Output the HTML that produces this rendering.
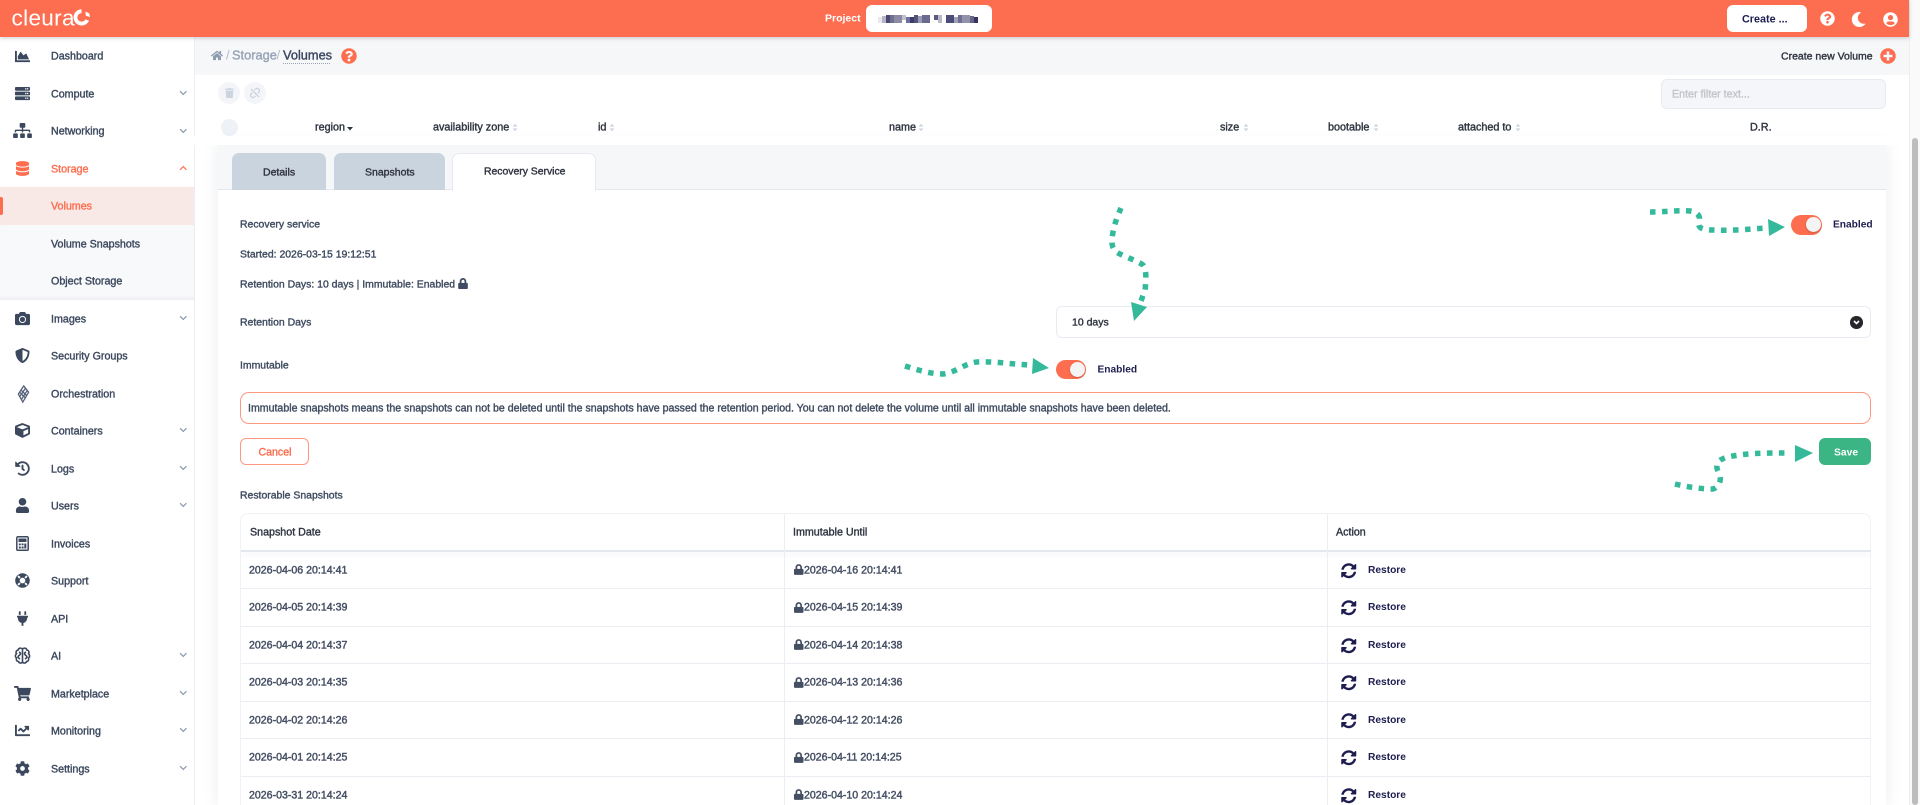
<!DOCTYPE html>
<html><head><meta charset="utf-8"><title>Volumes</title>
<style>
*{box-sizing:border-box}
html,body{margin:0;padding:0;width:1920px;height:805px;overflow:hidden;background:#fff;font-family:"Liberation Sans",sans-serif}
#w{position:absolute;left:0;top:0;width:1920px;height:805px;overflow:hidden;filter:blur(.3px)}
.a{position:absolute}
.t{position:absolute;white-space:nowrap;line-height:16px;font-size:10.45px;color:#3f4b60;-webkit-text-stroke:.38px currentColor;transform:translateY(.4px)}
.n{left:51px;font-size:10.7px;color:#3c485e}
.o{color:#fd6e50!important}
.h{font-size:10.8px;color:#2f3440}
.d{font-size:10.6px;color:#454f63;-webkit-text-stroke:.45px currentColor}
.r{left:1368px;font-size:10.2px;font-weight:bold;color:#1d1d50;-webkit-text-stroke:0;transform:translateY(1.2px)}
svg{position:absolute;display:block;overflow:visible}
.i{fill:#3c485e}
.c{left:178.750px;color:#8a97aa}
.line{position:absolute;left:241px;width:1630px;height:1px;background:#ebedf2}
</style></head><body>
<svg width="0" height="0" style="position:absolute"><defs>
<symbol id="lock" viewBox="0 0 448 512"><path d="M400 224h-24v-72C376 68.2 307.8 0 224 0S72 68.2 72 152v72H48c-26.5 0-48 21.5-48 48v192c0 26.5 21.5 48 48 48h352c26.5 0 48-21.5 48-48V272c0-26.5-21.5-48-48-48zm-104 0H152v-72c0-39.7 32.3-72 72-72s72 32.3 72 72v72z"/></symbol>
<symbol id="q" viewBox="0 0 512 512"><path d="M504 256c0 136.997-111.043 248-248 248S8 392.997 8 256C8 119.083 119.043 8 256 8s248 111.083 248 248zM262.655 90c-54.497 0-89.255 22.957-116.549 63.758-3.536 5.286-2.353 12.415 2.715 16.258l34.699 26.31c5.205 3.947 12.621 3.008 16.665-2.122 17.864-22.658 30.113-35.797 57.303-35.797 20.429 0 45.698 13.148 45.698 32.958 0 14.976-12.363 22.667-32.534 33.976C247.128 238.528 216 254.941 216 296v4c0 6.627 5.373 12 12 12h56c6.627 0 12-5.373 12-12v-1.333c0-28.462 83.186-29.647 83.186-106.667 0-58.002-60.165-102-116.531-102zM256 338c-25.365 0-46 20.635-46 46 0 25.364 20.635 46 46 46s46-20.636 46-46c0-25.365-20.635-46-46-46z"/></symbol>
<symbol id="sync" viewBox="0 0 512 512"><path d="M370.72 133.28C339.458 104.008 298.888 87.962 255.848 88c-77.458.068-144.328 53.178-162.791 126.85-1.344 5.363-6.122 9.15-11.651 9.15H24.103c-7.498 0-13.194-6.807-11.807-14.176C33.933 94.924 134.813 8 256 8c66.448 0 126.791 26.136 171.315 68.685L463.03 40.97C478.149 25.851 504 36.559 504 57.941V192c0 13.255-10.745 24-24 24H345.941c-21.382 0-32.09-25.851-16.971-40.971l41.75-41.749zM32 296h134.059c21.382 0 32.09 25.851 16.971 40.971l-41.75 41.75c31.262 29.273 71.835 45.319 114.876 45.28 77.418-.07 144.315-53.144 162.787-126.849 1.344-5.363 6.122-9.15 11.651-9.15h57.304c7.498 0 13.193 6.807 11.807 14.176C478.067 417.076 377.187 504 256 504c-66.448 0-126.791-26.136-171.315-68.685L48.97 471.03C33.851 486.149 8 475.441 8 454.059V320c0-13.255 10.745-24 24-24z"/></symbol>
<symbol id="sort" viewBox="0 0 10 14"><path d="M5 0.5 9 5.5H1zM5 13.5 1 8.5H9z"/></symbol>
<symbol id="chev" viewBox="0 0 12 8"><path d="M1.5 1.5 6 6l4.500-4.500" fill="none" stroke="currentColor" stroke-width="1.700"/></symbol>
</defs></svg>
<div id="w">

<!-- main backgrounds -->
<div class="a" style="left:194px;top:37px;width:1715px;height:38px;background:#f6f7f9"></div>
<div class="a" style="left:1909px;top:0;width:11px;height:805px;background:#fafafa;border-left:1px solid #eee"></div>
<div class="a" style="left:1912px;top:138px;width:6px;height:667px;background:#bdbdbd;border-radius:3px"></div>

<!-- sidebar -->
<div class="a" style="left:0;top:37px;width:195px;height:768px;background:#fff;border-right:1px solid #eceef3"></div>
<div class="a" style="left:0;top:187px;width:194px;height:113px;background:#f8f9fb;box-shadow:inset 0 4px 4px -3px #e4e4e8,inset 0 -4px 4px -3px #e8e8ec"></div>
<div class="a" style="left:0;top:187px;width:194px;height:38px;background:#f8e9e7"></div>
<div class="a" style="left:0;top:197px;width:2.500px;height:18px;background:#fd6e50;border-radius:0 2px 2px 0"></div>

<div class="t n" style="top:48px">Dashboard</div>
<div class="t n" style="top:85.500px">Compute</div>
<div class="t n" style="top:123px">Networking</div>
<div class="t n o" style="top:160.500px">Storage</div>
<div class="t n o" style="top:198px">Volumes</div>
<div class="t n" style="top:235.500px">Volume Snapshots</div>
<div class="t n" style="top:273px">Object Storage</div>
<div class="t n" style="top:310.500px">Images</div>
<div class="t n" style="top:348px">Security Groups</div>
<div class="t n" style="top:385.500px">Orchestration</div>
<div class="t n" style="top:423px">Containers</div>
<div class="t n" style="top:460.500px">Logs</div>
<div class="t n" style="top:498px">Users</div>
<div class="t n" style="top:535.500px">Invoices</div>
<div class="t n" style="top:573px">Support</div>
<div class="t n" style="top:610.500px">API</div>
<div class="t n" style="top:648px">AI</div>
<div class="t n" style="top:685.500px">Marketplace</div>
<div class="t n" style="top:723px">Monitoring</div>
<div class="t n" style="top:760.500px">Settings</div>

<!-- sidebar chevrons -->
<svg class="c" style="top:90px" width="8.500" height="6"><use href="#chev"/></svg>
<svg class="c" style="top:128px" width="8.500" height="6"><use href="#chev"/></svg>
<svg class="c" style="top:165px;color:#fd6e50;transform:rotate(180deg)" width="8.500" height="6"><use href="#chev"/></svg>
<svg class="c" style="top:315px" width="8.500" height="6"><use href="#chev"/></svg>
<svg class="c" style="top:427px" width="8.500" height="6"><use href="#chev"/></svg>
<svg class="c" style="top:465px" width="8.500" height="6"><use href="#chev"/></svg>
<svg class="c" style="top:502px" width="8.500" height="6"><use href="#chev"/></svg>
<svg class="c" style="top:652px" width="8.500" height="6"><use href="#chev"/></svg>
<svg class="c" style="top:690px" width="8.500" height="6"><use href="#chev"/></svg>
<svg class="c" style="top:727px" width="8.500" height="6"><use href="#chev"/></svg>
<svg class="c" style="top:765px" width="8.500" height="6"><use href="#chev"/></svg>

<!-- sidebar icons -->
<svg class="i" style="left:15px;top:49px" width="15" height="15" viewBox="0 0 512 512"><path d="M500 384c6.600 0 12 5.400 12 12v40c0 6.600-5.400 12-12 12H12c-6.600 0-12-5.400-12-12V76c0-6.600 5.400-12 12-12h40c6.600 0 12 5.400 12 12v308h436zM372.700 159.500L288 216l-85.300-113.700c-5.100-6.800-15.500-6.300-19.900 1L96 248v104h384l-89.900-187.800c-3.200-6.500-11.400-8.700-17.400-4.700z"/></svg>
<svg class="i" style="left:15px;top:86px" width="15" height="15" viewBox="0 0 512 512"><path d="M480 160H32c-17.673 0-32-14.327-32-32V64c0-17.673 14.327-32 32-32h448c17.673 0 32 14.327 32 32v64c0 17.673-14.327 32-32 32zm-48-88c-13.255 0-24 10.745-24 24s10.745 24 24 24 24-10.745 24-24-10.745-24-24-24zm-64 0c-13.255 0-24 10.745-24 24s10.745 24 24 24 24-10.745 24-24-10.745-24-24-24zm112 248H32c-17.673 0-32-14.327-32-32v-64c0-17.673 14.327-32 32-32h448c17.673 0 32 14.327 32 32v64c0 17.673-14.327 32-32 32zm-48-88c-13.255 0-24 10.745-24 24s10.745 24 24 24 24-10.745 24-24-10.745-24-24-24zm-64 0c-13.255 0-24 10.745-24 24s10.745 24 24 24 24-10.745 24-24-10.745-24-24-24zm112 248H32c-17.673 0-32-14.327-32-32v-64c0-17.673 14.327-32 32-32h448c17.673 0 32 14.327 32 32v64c0 17.673-14.327 32-32 32zm-48-88c-13.255 0-24 10.745-24 24s10.745 24 24 24 24-10.745 24-24-10.745-24-24-24zm-64 0c-13.255 0-24 10.745-24 24s10.745 24 24 24 24-10.745 24-24-10.745-24-24-24z"/></svg>
<svg class="i" style="left:13px;top:123px" width="19" height="15" viewBox="0 0 640 512"><path d="M128 352H32c-17.670 0-32 14.330-32 32v96c0 17.670 14.330 32 32 32h96c17.670 0 32-14.330 32-32v-96c0-17.670-14.330-32-32-32zm-24-80h192v48h48v-48h192v48h48v-57.590c0-21.170-17.230-38.410-38.410-38.410H344v-64h40c17.670 0 32-14.330 32-32V32c0-17.670-14.330-32-32-32H256c-17.670 0-32 14.330-32 32v96c0 17.670 14.330 32 32 32h40v64H94.410C73.230 224 56 241.230 56 262.410V320h48v-48zm264 80h-96c-17.670 0-32 14.330-32 32v96c0 17.670 14.330 32 32 32h96c17.670 0 32-14.330 32-32v-96c0-17.670-14.330-32-32-32zm240 0h-96c-17.670 0-32 14.330-32 32v96c0 17.670 14.330 32 32 32h96c17.670 0 32-14.330 32-32v-96c0-17.670-14.330-32-32-32z"/></svg>
<svg style="left:16px;top:161px;fill:#fd6e50" width="13" height="15" viewBox="0 0 448 512"><path d="M448 73.143v45.714C448 159.143 347.667 192 224 192S0 159.143 0 118.857V73.143C0 32.857 100.333 0 224 0s224 32.857 224 73.143zM448 176v102.857C448 319.143 347.667 352 224 352S0 319.143 0 278.857V176c48.125 33.143 136.208 48.572 224 48.572S399.874 209.143 448 176zm0 160v102.857C448 479.143 347.667 512 224 512S0 479.143 0 438.857V336c48.125 33.143 136.208 48.572 224 48.572S399.874 369.143 448 336z"/></svg>
<svg class="i" style="left:15px;top:311px" width="15" height="15" viewBox="0 0 512 512"><path d="M512 144v288c0 26.500-21.500 48-48 48H48c-26.500 0-48-21.500-48-48V144c0-26.500 21.500-48 48-48h88l12.300-32.900c7-18.700 24.900-31.100 44.900-31.100h125.500c20 0 37.900 12.400 44.900 31.100L376 96h88c26.500 0 48 21.500 48 48zM376 288c0-66.200-53.800-120-120-120s-120 53.800-120 120 53.800 120 120 120 120-53.800 120-120zm-32 0c0 48.500-39.500 88-88 88s-88-39.500-88-88 39.500-88 88-88 88 39.500 88 88z"/></svg>
<svg class="i" style="left:15px;top:348px" width="15" height="15" viewBox="0 0 512 512"><path d="M466.500 83.700l-192-80a48.150 48.150 0 0 0-36.900 0l-192 80C27.700 91.100 16 108.600 16 128c0 198.500 114.500 335.700 221.500 380.300 11.800 4.900 25.100 4.900 36.900 0C360.100 472.600 496 349.300 496 128c0-19.400-11.700-36.900-29.500-44.300zM256.100 446.300l-.1-381 175.900 73.300c-3.300 151.400-82.100 261.100-175.800 307.700z"/></svg>
<svg style="left:17px;top:385px" width="12.500" height="18" viewBox="0 0 14 20"><g fill="none" stroke="#56627a" stroke-width="1.500"><path d="M7.500 1 13 8 6.500 19 1.500 10z"/><path d="M4.500 5.500 11 12M3 8l6.500 6.500M9.500 3.500 3 13M11.500 6 5 16"/></g></svg>
<svg class="i" style="left:15px;top:423px" width="15" height="15" viewBox="0 0 512 512"><path d="M239.100 6.300l-208 78c-18.700 7-31.100 25-31.100 45v225.100c0 18.200 10.300 34.800 26.500 42.900l208 104c13.500 6.800 29.400 6.800 42.900 0l208-104c16.300-8.100 26.500-24.800 26.500-42.900V129.300c0-20-12.400-37.900-31.100-44.900l-208-78C262 2.200 250 2.200 239.100 6.300zM256 68.400l192 72v1.100l-192 78-192-78v-1.100l192-72zm32 356V275.500l160-65v133.900l-160 80z"/></svg>
<svg class="i" style="left:15px;top:461px" width="15" height="15" viewBox="0 0 512 512"><path d="M504 255.531c.253 136.640-111.180 248.372-247.820 248.468-59.015.042-113.223-20.530-155.822-54.911-11.077-8.940-11.905-25.541-1.839-35.607l11.267-11.267c8.609-8.609 22.353-9.551 31.891-1.984C173.062 425.135 212.781 440 256 440c101.705 0 184-82.311 184-184 0-101.705-82.311-184-184-184-48.814 0-93.149 18.969-126.068 49.932l50.754 50.754c10.080 10.080 2.941 27.314-11.313 27.314H24c-8.837 0-16-7.163-16-16V38.627c0-14.254 17.234-21.393 27.314-11.314l49.372 49.372C129.209 34.136 189.552 8 256 8c136.810 0 247.747 110.780 248 247.531zm-180.912 78.784l9.823-12.630c8.138-10.463 6.253-25.542-4.210-33.679L288 256.349V152c0-13.255-10.745-24-24-24h-16c-13.255 0-24 10.745-24 24v135.651l65.409 50.874c10.463 8.137 25.541 6.253 33.679-4.210z"/></svg>
<svg class="i" style="left:15px;top:498px" width="15" height="15" viewBox="0 0 448 512"><path d="M224 256c70.700 0 128-57.300 128-128S294.700 0 224 0 96 57.300 96 128s57.300 128 128 128zm89.600 32h-16.700c-22.200 10.200-46.900 16-72.900 16s-50.600-5.800-72.900-16h-16.700C60.200 288 0 348.200 0 422.400V464c0 26.500 21.500 48 48 48h352c26.500 0 48-21.500 48-48v-41.600c0-74.200-60.200-134.400-134.400-134.400z"/></svg>
<svg style="left:16px;top:536px" width="13" height="15" viewBox="0 0 13 15"><path fill="none" stroke="#3c485e" stroke-width="1.500" d="M1.800.8h9.400a1 1 0 0 1 1 1v11.400a1 1 0 0 1-1 1H1.800a1 1 0 0 1-1-1V1.800a1 1 0 0 1 1-1z"/><path fill="#3c485e" d="M2.500 2.500h8V6h-8zM2.800 7.500h2v1.800h-2zM5.600 7.500h2v1.800h-2zM8.300 7.500h2v5h-2zM2.800 10.500h2v2h-2zM5.600 10.500h2v2h-2z"/></svg>
<svg class="i" style="left:15px;top:573px" width="15" height="15" viewBox="0 0 512 512"><path d="M256 8C119.033 8 8 119.033 8 256s111.033 248 248 248 248-111.033 248-248S392.967 8 256 8zm173.696 119.559l-63.399 63.399c-10.987-18.559-26.670-34.252-45.255-45.255l63.399-63.399a218.396 218.396 0 0 1 45.255 45.255zM256 352c-53.019 0-96-42.981-96-96s42.981-96 96-96 96 42.981 96 96-42.981 96-96 96zM127.559 82.304l63.399 63.399c-18.559 10.987-34.252 26.670-45.255 45.255l-63.399-63.399a218.372 218.372 0 0 1 45.255-45.255zM82.304 384.441l63.399-63.399c10.987 18.559 26.670 34.252 45.255 45.255l-63.399 63.399a218.396 218.396 0 0 1-45.255-45.255zm302.137 45.255l-63.399-63.399c18.559-10.987 34.252-26.670 45.255-45.255l63.399 63.399a218.403 218.403 0 0 1-45.255 45.255z"/></svg>
<svg class="i" style="left:17px;top:611px" width="11" height="15" viewBox="0 0 384 512"><path d="M320,32a32,32,0,0,0-64,0v96h64Zm48,128H16A16,16,0,0,0,0,176v32a16,16,0,0,0,16,16H32v32A160.070,160.070,0,0,0,160,412.800V512h64V412.800A160.070,160.070,0,0,0,352,256V224h16a16,16,0,0,0,16-16V176A16,16,0,0,0,368,160ZM128,32a32,32,0,0,0-64,0v96h64Z"/></svg>
<svg style="left:14px;top:647px" width="17" height="17" viewBox="0 0 17 17"><g fill="none" stroke="#3c485e" stroke-width="1.600"><path d="M8.500 2C7 .5 4.500 1 4.200 3 2.200 3.200 1.500 5.500 2.500 6.700 1 8 1 10 2.500 11c-.8 1.700.3 3.500 2 3.500.5 1.800 2.800 2 4 .7 1.200 1.300 3.500 1.100 4-.7 1.700 0 2.800-1.800 2-3.500 1.500-1 1.500-3 0-4.300 1-1.200.3-3.500-1.700-3.700C12.500 1 10 .5 8.500 2z"/><path d="M8.500 2v13.200M5 5c2 1 2 2 0 3.500s0 3 1 3.500M12 5c-2 1-2 2 0 3.500s0 3-1 3.500"/></g></svg>
<svg class="i" style="left:14px;top:686px" width="17" height="15" viewBox="0 0 576 512"><path d="M528.120 301.319l47.273-208C578.806 78.301 567.391 64 551.990 64H159.208l-9.166-44.810C147.758 8.021 137.930 0 126.529 0H24C10.745 0 0 10.745 0 24v16c0 13.255 10.745 24 24 24h69.883l70.248 343.435C147.325 417.100 136 435.222 136 456c0 30.928 25.072 56 56 56s56-25.072 56-56c0-15.674-6.447-29.835-16.824-40h209.647C430.447 426.165 424 440.326 424 456c0 30.928 25.072 56 56 56s56-25.072 56-56c0-22.172-12.888-41.332-31.579-50.405l5.517-24.276c3.413-15.018-8.002-29.319-23.403-29.319H218.117l-6.545-32h293.145c11.206 0 20.920-7.754 23.403-18.681z"/></svg>
<svg class="i" style="left:15px;top:723px" width="15" height="15" viewBox="0 0 512 512"><path d="M496 384H64V80c0-8.840-7.160-16-16-16H16C7.160 64 0 71.160 0 80v336c0 17.670 14.330 32 32 32h464c8.840 0 16-7.160 16-16v-32c0-8.840-7.160-16-16-16zM464 96H345.940c-21.380 0-32.090 25.850-16.970 40.970l32.400 32.400L288 242.750l-73.370-73.370c-12.500-12.500-32.760-12.500-45.250 0l-68.690 68.690c-6.250 6.250-6.250 16.380 0 22.630l22.620 22.620c6.250 6.250 16.380 6.250 22.630 0L192 237.250l73.370 73.370c12.500 12.500 32.760 12.500 45.250 0l96-96 32.400 32.400c15.120 15.120 40.970 4.410 40.970-16.970V112c.010-8.840-7.150-16-15.990-16z"/></svg>
<svg class="i" style="left:15px;top:761px" width="15" height="15" viewBox="0 0 512 512"><path d="M487.400 315.700l-42.600-24.600c4.300-23.200 4.300-47 0-70.200l42.600-24.600c4.900-2.800 7.100-8.600 5.500-14-11.100-35.600-30-67.800-54.700-94.600-3.800-4.100-10-5.100-14.800-2.300L380.800 110c-17.900-15.400-38.500-27.300-60.800-35.100V25.800c0-5.600-3.900-10.500-9.400-11.700-36.700-8.200-74.300-7.800-109.200 0-5.500 1.200-9.400 6.100-9.400 11.700V75c-22.200 7.900-42.800 19.800-60.800 35.100L88.700 85.500c-4.900-2.800-11-1.900-14.800 2.300-24.700 26.700-43.600 58.900-54.700 94.600-1.700 5.400.6 11.200 5.500 14L67.300 221c-4.300 23.200-4.300 47 0 70.200l-42.600 24.600c-4.900 2.800-7.100 8.600-5.500 14 11.100 35.600 30 67.800 54.700 94.600 3.800 4.100 10 5.100 14.800 2.300l42.600-24.600c17.900 15.400 38.500 27.300 60.800 35.100v49.200c0 5.600 3.900 10.500 9.400 11.700 36.700 8.200 74.300 7.800 109.200 0 5.500-1.200 9.400-6.100 9.400-11.700v-49.200c22.200-7.900 42.800-19.800 60.800-35.100l42.600 24.600c4.900 2.800 11 1.900 14.800-2.300 24.700-26.700 43.600-58.900 54.700-94.600 1.500-5.500-.7-11.300-5.600-14.100zM256 336c-44.100 0-80-35.900-80-80s35.900-80 80-80 80 35.900 80 80-35.900 80-80 80z"/></svg>

<!-- top bar -->
<div class="a" style="left:0;top:0;width:1909px;height:37px;background:#fd6e50;box-shadow:0 1px 4px rgba(60,60,80,.25)"></div>
<div class="t" style="left:11.500px;top:5.500px;font-size:22.500px;letter-spacing:.35px;line-height:24px;color:#fff;font-weight:400;-webkit-text-stroke:0">cleura</div>
<svg style="left:72px;top:8px" width="19" height="19" viewBox="0 0 19 19"><path d="M9.500 3.200A6.200 6.200 0 1 0 15.300 12" fill="none" stroke="#fff" stroke-width="3.800"/><path d="M13.500 3.500 17.300 5.500 18 9 13.800 7.800z" fill="#fff"/></svg>
<div class="t" style="left:825px;top:10px;font-size:10.500px;color:#fff;font-weight:bold;-webkit-text-stroke:0">Project</div>
<div class="a" style="left:866px;top:5px;width:126px;height:27px;background:#fff;border-radius:6px"></div>
<svg style="left:878px;top:15px" width="100" height="10" shape-rendering="crispEdges"><g>
<rect x="0" y="2" width="4" height="6" fill="#e8e8ee"/><rect x="4" y="1" width="4" height="7" fill="#b5b5c8"/><rect x="8" y="0" width="4" height="8" fill="#4a4a70"/><rect x="12" y="0" width="4" height="8" fill="#6f6f90"/><rect x="16" y="0" width="8" height="8" fill="#8b8ba5"/><rect x="24" y="0" width="4" height="5" fill="#c0c0cf"/><rect x="28" y="2" width="4" height="6" fill="#7070a0"/><rect x="32" y="2" width="4" height="6" fill="#3c3c68"/><rect x="36" y="0" width="4" height="8" fill="#55557c"/><rect x="40" y="1" width="4" height="7" fill="#9a9ab4"/><rect x="44" y="0" width="8" height="8" fill="#6a6a90"/><rect x="56" y="0" width="4" height="5" fill="#5a5a80"/><rect x="60" y="0" width="4" height="8" fill="#b8b8c8"/><rect x="68" y="0" width="8" height="8" fill="#4c4c78"/><rect x="76" y="2" width="4" height="6" fill="#a0a0b8"/><rect x="80" y="0" width="4" height="8" fill="#6f6f95"/><rect x="84" y="0" width="8" height="8" fill="#9292aa"/><rect x="92" y="1" width="4" height="7" fill="#66668a"/><rect x="96" y="2" width="4" height="6" fill="#34345e"/></g></svg>
<div class="a" style="left:1727px;top:5px;width:80px;height:27px;background:#fff;border-radius:6px"></div>
<div class="t" style="left:1742px;top:10.500px;font-size:10.800px;font-weight:bold;color:#1d1d50;-webkit-text-stroke:0">Create ...</div>
<svg style="left:1820px;top:11px;fill:#fff" width="15" height="15"><use href="#q"/></svg>
<svg style="left:1851px;top:12px;fill:#fff" width="15" height="15" viewBox="0 0 512 512"><path d="M283.211 512c78.962 0 151.079-35.925 198.857-94.792 7.068-8.708-.639-21.430-11.562-19.350-124.203 23.654-238.262-71.576-238.262-196.954 0-72.222 38.662-138.635 101.498-174.394 9.686-5.512 7.250-20.197-3.756-22.230A258.156 258.156 0 0 0 283.211 0c-141.309 0-256 114.511-256 256 0 141.309 114.511 256 256 256z"/></svg>
<svg style="left:1883px;top:12px;fill:#fff" width="15" height="15" viewBox="0 0 496 512"><path d="M248 8C111 8 0 119 0 256s111 248 248 248 248-111 248-248S385 8 248 8zm0 96c48.600 0 88 39.400 88 88s-39.400 88-88 88-88-39.400-88-88 39.400-88 88-88zm0 344c-58.700 0-111.300-26.600-146.500-68.200 18.800-35.400 55.600-59.800 98.500-59.800 2.400 0 4.800.4 7.100 1.100 13 4.200 26.600 6.900 40.900 6.900 14.300 0 28-2.700 40.900-6.900 2.300-.7 4.700-1.100 7.100-1.100 42.900 0 79.700 24.400 98.500 59.800C359.300 421.400 306.700 448 248 448z"/></svg>

<!-- breadcrumb -->
<svg style="left:211px;top:50px;fill:#8d9bb0" width="12" height="11" viewBox="0 0 576 512"><path d="M280.370 148.260L96 300.110V464a16 16 0 0 0 16 16l112.060-.29a16 16 0 0 0 15.920-16V368a16 16 0 0 1 16-16h64a16 16 0 0 1 16 16v95.640a16 16 0 0 0 16 16.050L464 480a16 16 0 0 0 16-16V300L295.670 148.260a12.190 12.190 0 0 0-15.300 0zM571.600 251.470L488 182.560V44.050a12 12 0 0 0-12-12h-56a12 12 0 0 0-12 12v72.610L318.470 43a48 48 0 0 0-61 0L4.340 251.470a12 12 0 0 0-1.600 16.900l25.500 31A12 12 0 0 0 45.150 301l235.220-193.740a12.190 12.190 0 0 1 15.300 0L530.900 301a12 12 0 0 0 16.900-1.600l25.500-31a12 12 0 0 0-1.700-16.930z"/></svg>
<div class="t" style="left:226px;top:47px;font-size:13px;color:#b2bbc9;-webkit-text-stroke:0">/</div>
<div class="t" style="left:232px;top:47px;font-size:12.800px;color:#97a3b6">Storage</div>
<div class="t" style="left:276.500px;top:47px;font-size:13px;color:#b2bbc9;-webkit-text-stroke:0">/</div>
<div class="t" style="left:283px;top:47px;font-size:12.800px;color:#3a4660">Volumes</div>
<div class="a" style="left:283px;top:63px;width:47px;border-top:1px dotted #98a4b6"></div>
<svg style="left:341px;top:48px;fill:#fd6e50" width="16" height="16"><use href="#q"/></svg>
<div class="t h" style="left:1781px;top:48px;font-size:10.500px">Create new Volume</div>
<svg style="left:1880px;top:48px;fill:#fd6e50" width="16" height="16" viewBox="0 0 512 512"><path d="M256 8C119 8 8 119 8 256s111 248 248 248 248-111 248-248S393 8 256 8zm144 276c0 6.600-5.400 12-12 12h-92v92c0 6.600-5.400 12-12 12h-56c-6.600 0-12-5.400-12-12v-92h-92c-6.600 0-12-5.400-12-12v-56c0-6.600 5.400-12 12-12h92v-92c0-6.600 5.400-12 12-12h56c6.600 0 12 5.400 12 12v92h92c6.600 0 12 5.400 12 12v56z"/></svg>

<!-- toolbar -->
<div class="a" style="left:218px;top:82px;width:22px;height:22px;border-radius:50%;background:#f4f5f8"></div>
<div class="a" style="left:244px;top:82px;width:22px;height:22px;border-radius:50%;background:#f4f5f8"></div>
<svg style="left:224.500px;top:88px;fill:#ccd4df" width="9" height="10" viewBox="0 0 448 512"><path d="M432 32H312l-9.400-18.700A24 24 0 0 0 281.100 0H166.800a23.720 23.720 0 0 0-21.400 13.300L136 32H16A16 16 0 0 0 0 48v32a16 16 0 0 0 16 16h416a16 16 0 0 0 16-16V48a16 16 0 0 0-16-16zM53.200 467a48 48 0 0 0 47.900 45h245.800a48 48 0 0 0 47.900-45L416 128H32z"/></svg>
<svg style="left:250px;top:88px" width="10" height="10" viewBox="0 0 10 10"><g fill="none" stroke="#ccd4df" stroke-width="1.400"><path d="M4.500 2 5.800 1a2.200 2.200 0 0 1 3.100 3.100L7.800 5.300M5.500 8 4.200 9A2.200 2.200 0 0 1 1.100 5.900L2.200 4.700M1 1l8 8"/></g></svg>
<div class="a" style="left:1661px;top:79px;width:225px;height:30px;background:#f5f6f9;border:1px solid #e8ebf0;border-radius:6px"></div>
<div class="t" style="left:1672px;top:86px;color:#c3c5ca;font-size:10.700px">Enter filter text...</div>

<!-- table head -->
<div class="a" style="left:221px;top:119px;width:17px;height:17px;border-radius:50%;background:#eef2f7"></div>
<div class="t h" style="left:315px;top:119px">region</div>
<svg style="left:347px;top:126.500px;fill:#2f3440" width="6" height="4"><path d="M0 0h6L3 3.500z"/></svg>
<div class="t h" style="left:433px;top:119px">availability zone</div>
<div class="t h" style="left:598px;top:119px">id</div>
<div class="t h" style="left:889px;top:119px">name</div>
<div class="t h" style="left:1220px;top:119px">size</div>
<div class="t h" style="left:1328px;top:119px">bootable</div>
<div class="t h" style="left:1458px;top:119px">attached to</div>
<div class="t h" style="left:1750px;top:119px">D.R.</div>
<svg style="left:512px;top:123px;fill:#ccd6e2" width="6" height="9"><use href="#sort"/></svg>
<svg style="left:609px;top:123px;fill:#ccd6e2" width="6" height="9"><use href="#sort"/></svg>
<svg style="left:918px;top:123px;fill:#ccd6e2" width="6" height="9"><use href="#sort"/></svg>
<svg style="left:1243px;top:123px;fill:#ccd6e2" width="6" height="9"><use href="#sort"/></svg>
<svg style="left:1373px;top:123px;fill:#ccd6e2" width="6" height="9"><use href="#sort"/></svg>
<svg style="left:1515px;top:123px;fill:#ccd6e2" width="6" height="9"><use href="#sort"/></svg>

<!-- panel -->
<div class="a" style="left:218px;top:145px;width:1668px;height:660px;background:#fff;box-shadow:0 0 14px rgba(90,100,130,.12)"></div>
<div class="a" style="left:194px;top:136px;width:1715px;height:9px;background:#fff"></div>
<div class="a" style="left:218px;top:145px;width:1668px;height:45px;background:#f6f7f9;border-bottom:1px solid #e3e7ee"></div>
<div class="a" style="left:232px;top:153px;width:94px;height:37px;background:#cad4df;border-radius:7px 7px 0 0"></div>
<div class="a" style="left:334px;top:153px;width:111px;height:37px;background:#cad4df;border-radius:7px 7px 0 0"></div>
<div class="a" style="left:452px;top:153px;width:144px;height:38px;background:#fff;border:1px solid #e6e9f0;border-bottom:none;border-radius:7px 7px 0 0"></div>
<div class="t h" style="left:263px;top:164px;font-size:10.500px">Details</div>
<div class="t h" style="left:365px;top:164px;font-size:10.500px">Snapshots</div>
<div class="t h" style="left:484px;top:164px;font-size:10.400px">Recovery Service</div>

<!-- form -->
<div class="t" style="left:240px;top:217px">Recovery service</div>
<div class="t" style="left:240px;top:246.500px">Started: 2026-03-15 19:12:51</div>
<div class="t" style="left:240px;top:276.500px">Retention Days: 10 days | Immutable: Enabled</div>
<svg style="left:458px;top:278px;fill:#3f4b60" width="10" height="11"><use href="#lock"/></svg>
<div class="t" style="left:240px;top:315px">Retention Days</div>
<div class="t" style="left:240px;top:358px">Immutable</div>

<div class="a" style="left:1056px;top:306px;width:815px;height:32px;border:1px solid #e8ebf2;border-radius:6px;background:#fff"></div>
<div class="t h" style="left:1072px;top:314px;font-size:10.500px">10 days</div>
<div class="a" style="left:1850px;top:316px;width:12.500px;height:12.500px;border-radius:50%;background:#26262c"></div>
<svg style="left:1853px;top:320px" width="7" height="5" viewBox="0 0 7 5"><path d="M1 1 3.500 3.500 6 1" fill="none" stroke="#fff" stroke-width="1.600"/></svg>

<div class="a" style="left:1791px;top:215px;width:31px;height:20px;border-radius:10px;background:#fd6e50"></div>
<div class="a" style="left:1806px;top:217px;width:15px;height:15px;border-radius:50%;background:#f4f4f4;box-shadow:0 1px 2px rgba(0,0,0,.2)"></div>
<div class="t" style="left:1833px;top:217px;color:#1d1d50;font-weight:bold;-webkit-text-stroke:0;font-size:10.200px">Enabled</div>
<div class="a" style="left:1056px;top:360px;width:30px;height:19px;border-radius:10px;background:#fd6e50"></div>
<div class="a" style="left:1070px;top:362px;width:15px;height:15px;border-radius:50%;background:#f4f4f4;box-shadow:0 1px 2px rgba(0,0,0,.2)"></div>
<div class="t" style="left:1097.500px;top:361.500px;color:#1d1d50;font-weight:bold;-webkit-text-stroke:0;font-size:10.200px">Enabled</div>

<div class="a" style="left:240px;top:392px;width:1631px;height:31.500px;border:1.500px solid #fd9884;border-radius:9px"></div>
<div class="t" style="left:248px;top:400px;font-size:10.600px;color:#3f4b60">Immutable snapshots means the snapshots can not be deleted until the snapshots have passed the retention period. You can not delete the volume until all immutable snapshots have been deleted.</div>
<div class="a" style="left:240px;top:438px;width:69px;height:27px;border:1.500px solid #fd9884;border-radius:6px"></div>
<div class="t o" style="left:258.500px;top:444.400px;font-size:10.600px">Cancel</div>
<div class="a" style="left:1819px;top:438px;width:52px;height:27px;background:#3bb583;border-radius:6px"></div>
<div class="t" style="left:1834px;top:445px;font-size:10.300px;color:#fff;font-weight:bold;-webkit-text-stroke:0">Save</div>
<div class="t" style="left:240px;top:487.500px">Restorable Snapshots</div>

<!-- table -->
<div class="a" style="left:240px;top:513px;width:1631px;height:300px;border:1px solid #f1f2f6;border-radius:8px 8px 0 0"></div>
<div class="a" style="left:241px;top:550px;width:1630px;height:1.500px;background:#e4e7ed;box-shadow:0 3px 4px rgba(120,130,160,.1)"></div>
<div class="a" style="left:784px;top:514px;width:1px;height:291px;background:#eceef2"></div>
<div class="a" style="left:1327px;top:514px;width:1px;height:291px;background:#eceef2"></div>
<div class="line" style="top:588px"></div><div class="line" style="top:626px"></div><div class="line" style="top:663px"></div><div class="line" style="top:701px"></div><div class="line" style="top:738px"></div><div class="line" style="top:776px"></div>
<div class="t h" style="left:250px;top:523.500px;font-size:10.700px">Snapshot Date</div>
<div class="t h" style="left:793px;top:523.500px;font-size:10.700px">Immutable Until</div>
<div class="t h" style="left:1336px;top:523.500px;font-size:10.700px">Action</div>

<div class="t d" style="left:249px;top:561.500px">2026-04-06 20:14:41</div>
<div class="t d" style="left:249px;top:599px">2026-04-05 20:14:39</div>
<div class="t d" style="left:249px;top:636.500px">2026-04-04 20:14:37</div>
<div class="t d" style="left:249px;top:674px">2026-04-03 20:14:35</div>
<div class="t d" style="left:249px;top:711.500px">2026-04-02 20:14:26</div>
<div class="t d" style="left:249px;top:749px">2026-04-01 20:14:25</div>
<div class="t d" style="left:249px;top:786.500px">2026-03-31 20:14:24</div>

<div class="t d" style="left:804px;top:561.500px">2026-04-16 20:14:41</div>
<div class="t d" style="left:804px;top:599px">2026-04-15 20:14:39</div>
<div class="t d" style="left:804px;top:636.500px">2026-04-14 20:14:38</div>
<div class="t d" style="left:804px;top:674px">2026-04-13 20:14:36</div>
<div class="t d" style="left:804px;top:711.500px">2026-04-12 20:14:26</div>
<div class="t d" style="left:804px;top:749px">2026-04-11 20:14:25</div>
<div class="t d" style="left:804px;top:786.500px">2026-04-10 20:14:24</div>

<svg style="left:794px;top:564px;fill:#454f63" width="9.500" height="11"><use href="#lock"/></svg>
<svg style="left:794px;top:601.500px;fill:#454f63" width="9.500" height="11"><use href="#lock"/></svg>
<svg style="left:794px;top:639px;fill:#454f63" width="9.500" height="11"><use href="#lock"/></svg>
<svg style="left:794px;top:676.500px;fill:#454f63" width="9.500" height="11"><use href="#lock"/></svg>
<svg style="left:794px;top:714px;fill:#454f63" width="9.500" height="11"><use href="#lock"/></svg>
<svg style="left:794px;top:751.500px;fill:#454f63" width="9.500" height="11"><use href="#lock"/></svg>
<svg style="left:794px;top:789px;fill:#454f63" width="9.500" height="11"><use href="#lock"/></svg>

<svg style="left:1341px;top:562.500px;fill:#1d1d50" width="15.500" height="15.500"><use href="#sync"/></svg>
<svg style="left:1341px;top:600px;fill:#1d1d50" width="15.500" height="15.500"><use href="#sync"/></svg>
<svg style="left:1341px;top:637.500px;fill:#1d1d50" width="15.500" height="15.500"><use href="#sync"/></svg>
<svg style="left:1341px;top:675px;fill:#1d1d50" width="15.500" height="15.500"><use href="#sync"/></svg>
<svg style="left:1341px;top:712.500px;fill:#1d1d50" width="15.500" height="15.500"><use href="#sync"/></svg>
<svg style="left:1341px;top:750px;fill:#1d1d50" width="15.500" height="15.500"><use href="#sync"/></svg>
<svg style="left:1341px;top:787.500px;fill:#1d1d50" width="15.500" height="15.500"><use href="#sync"/></svg>

<div class="t r" style="top:561.500px">Restore</div>
<div class="t r" style="top:599px">Restore</div>
<div class="t r" style="top:636.500px">Restore</div>
<div class="t r" style="top:674px">Restore</div>
<div class="t r" style="top:711.500px">Restore</div>
<div class="t r" style="top:749px">Restore</div>
<div class="t r" style="top:786.500px">Restore</div>

<!-- arrows -->
<svg style="left:0;top:0" width="1920" height="805" fill="none" stroke="#35b99b" stroke-width="5.500" stroke-dasharray="5.500 6.500">
<path d="M1650 212C1665 212 1680 210 1690 211 1698 212 1701 217 1699 222 1697 228 1703 230 1713 230 1730 231 1750 229 1767 228"/>
<path d="M1121 208C1118 215 1115 222 1113 232 1111 243 1111 250 1120 254 1128 258 1138 261 1143 265 1147 270 1146 282 1145 290L1141 301"/>
<path d="M905 366C918 370 930 374 943 374 955 373 965 363 977 362 993 361 1010 364 1029 365"/>
<path d="M1675 484C1688 487 1700 489 1713 489 1720 487 1722 478 1719 473 1713 463 1720 459 1728 457 1745 453 1765 453 1788 453"/>
</svg>
<svg style="left:0;top:0" width="1920" height="805" fill="#35b99b">
<path d="M1768 219 1785 227 1769 236z"/>
<path d="M1131 302 1147 307 1134 321z"/>
<path d="M1033 358 1049 368 1032 374z"/>
<path d="M1795 445 1813 453 1795 462z"/>
</svg>
</div>
</body></html>
